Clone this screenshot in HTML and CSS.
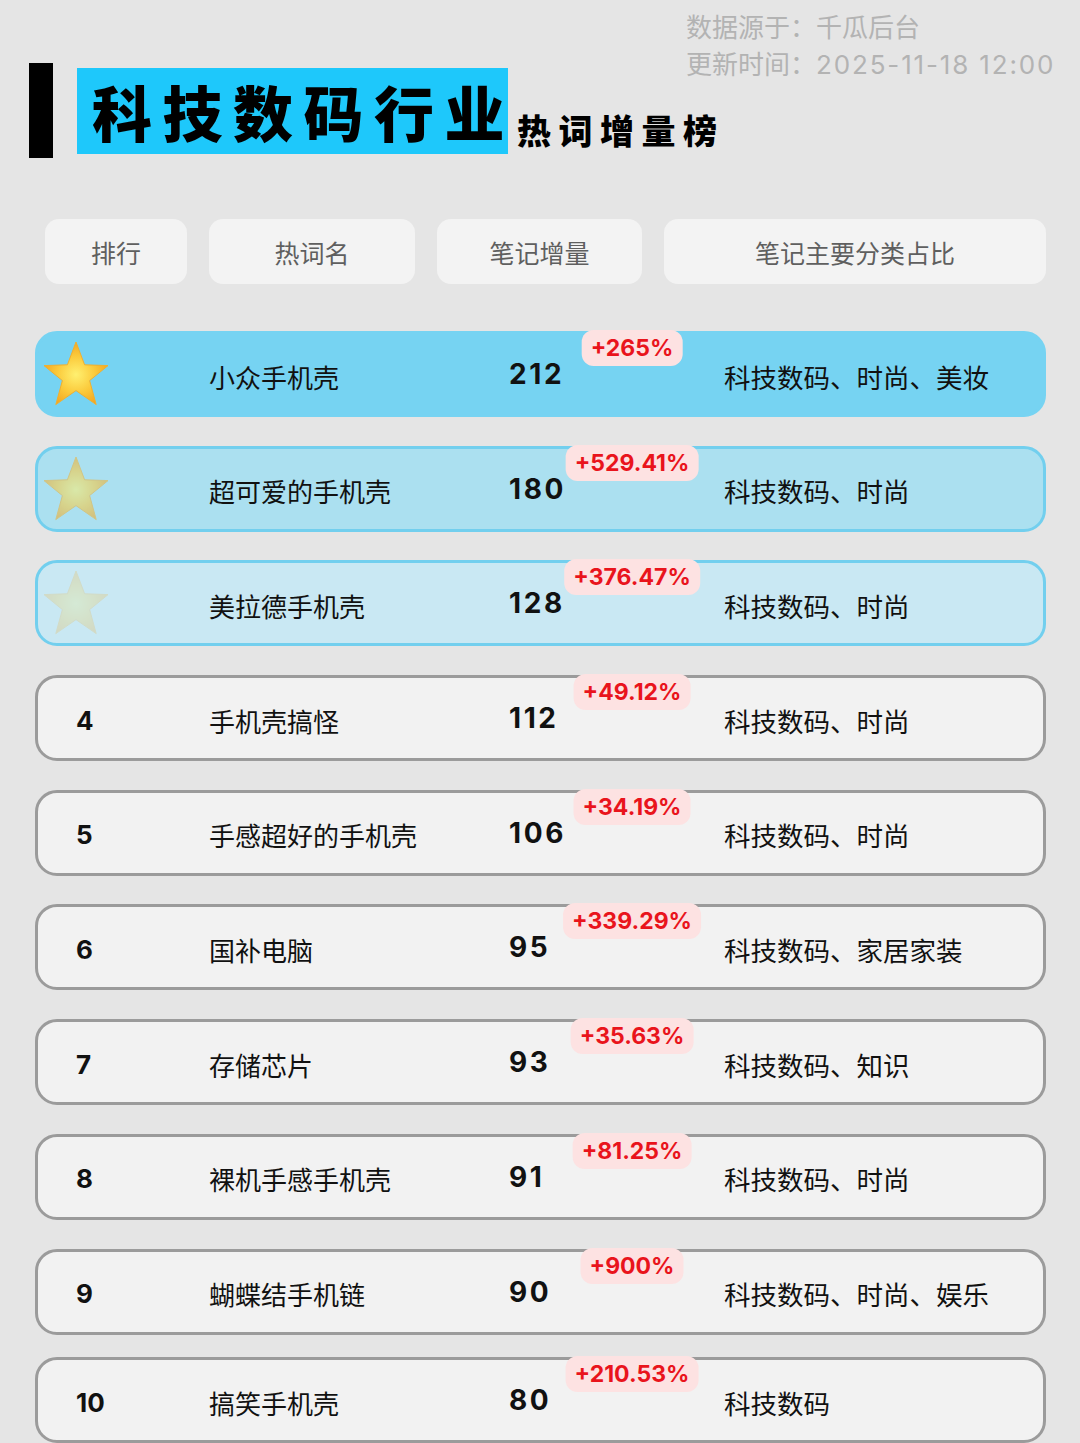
FILE: index.html
```html
<!DOCTYPE html>
<html lang="zh-CN">
<head>
<meta charset="utf-8">
<title>科技数码行业热词增量榜</title>
<link rel="stylesheet" href="styles.css">
</head>
<body>
<svg width="0" height="0" class="defs" aria-hidden="true">
  <defs>
    <radialGradient id="starGrad" cx="50%" cy="52%" r="55%">
      <stop offset="0%" stop-color="#fff070"/>
      <stop offset="55%" stop-color="#fbc93a"/>
      <stop offset="100%" stop-color="#f3a31f"/>
    </radialGradient>
    <symbol id="star" viewBox="0 0 68 68">
      <path d="M34 2 L42.6 24.8 L66 25.6 L47.6 40.6 L54.2 64.6 L34 50.6 L13.8 64.6 L20.4 40.6 L2 25.6 L25.4 24.8 Z" fill="url(#starGrad)" stroke="#f0b030" stroke-width="1" stroke-linejoin="round"/>
    </symbol>
  </defs>
</svg>
<div class="page">
  <header class="header">
    <div class="meta">
      <div class="meta-line">数据源于：千瓜后台</div>
      <div class="meta-line">更新时间：<span class="digits">2025-11-18 12:00</span></div>
    </div>
    <div class="title-row">
      <div class="title-bar"></div>
      <div class="title-box"><h1>科技数码行业</h1></div>
      <div class="subtitle">热词增量榜</div>
    </div>
  </header>

  <div class="thead">
    <div class="th">排行</div>
    <div class="th">热词名</div>
    <div class="th">笔记增量</div>
    <div class="th">笔记主要分类占比</div>
  </div>

  <div class="list">
    <div class="row top1">
      <div class="rank"><svg class="star" width="68" height="68"><use href="#star"/></svg></div>
      <div class="kw">小众手机壳</div>
      <div class="num">212</div>
      <div class="cat">科技数码、时尚、美妆</div>
      <span class="badge">+265%</span>
    </div>
    <div class="row top2">
      <div class="rank"><svg class="star" width="68" height="68"><use href="#star"/></svg></div>
      <div class="kw">超可爱的手机壳</div>
      <div class="num">180</div>
      <div class="cat">科技数码、时尚</div>
      <span class="badge">+529.41%</span>
    </div>
    <div class="row top3">
      <div class="rank"><svg class="star" width="68" height="68"><use href="#star"/></svg></div>
      <div class="kw">美拉德手机壳</div>
      <div class="num">128</div>
      <div class="cat">科技数码、时尚</div>
      <span class="badge">+376.47%</span>
    </div>
    <div class="row">
      <div class="rank">4</div>
      <div class="kw">手机壳搞怪</div>
      <div class="num">112</div>
      <div class="cat">科技数码、时尚</div>
      <span class="badge">+49.12%</span>
    </div>
    <div class="row">
      <div class="rank">5</div>
      <div class="kw">手感超好的手机壳</div>
      <div class="num">106</div>
      <div class="cat">科技数码、时尚</div>
      <span class="badge">+34.19%</span>
    </div>
    <div class="row">
      <div class="rank">6</div>
      <div class="kw">国补电脑</div>
      <div class="num">95</div>
      <div class="cat">科技数码、家居家装</div>
      <span class="badge">+339.29%</span>
    </div>
    <div class="row">
      <div class="rank">7</div>
      <div class="kw">存储芯片</div>
      <div class="num">93</div>
      <div class="cat">科技数码、知识</div>
      <span class="badge">+35.63%</span>
    </div>
    <div class="row">
      <div class="rank">8</div>
      <div class="kw">裸机手感手机壳</div>
      <div class="num">91</div>
      <div class="cat">科技数码、时尚</div>
      <span class="badge">+81.25%</span>
    </div>
    <div class="row">
      <div class="rank">9</div>
      <div class="kw">蝴蝶结手机链</div>
      <div class="num">90</div>
      <div class="cat">科技数码、时尚、娱乐</div>
      <span class="badge">+900%</span>
    </div>
    <div class="row last">
      <div class="rank">10</div>
      <div class="kw">搞笑手机壳</div>
      <div class="num">80</div>
      <div class="cat">科技数码</div>
      <span class="badge">+210.53%</span>
    </div>
  </div>
</div>
</body>
</html>
```

FILE: styles.css
```css
* { box-sizing: border-box; }
html, body { margin: 0; padding: 0; }
body {
  background: #e5e5e5;
  font-family: "Noto Sans CJK SC", "Noto Sans", sans-serif;
  color: #111;
  width: 1080px;
  height: 1443px;
  overflow: hidden;
  text-spacing-trim: space-all;
}
.defs { position: absolute; width: 0; height: 0; }
.page { display: flex; flex-direction: column; }

.header { display: flex; flex-direction: column; }
.meta {
  align-self: flex-end;
  margin-right: 14px;
  margin-top: 7px;
  width: 380px;
  height: 74px;
  font-size: 26px;
  color: #b3b3b3;
  white-space: nowrap;
}
.meta-line {
  height: 37px;
  line-height: 37px;
  overflow: visible;
}
.meta .digits {
  font-family: "Inter", "Noto Sans", sans-serif;
  letter-spacing: 1.85px;
}
.title-row {
  display: flex;
  align-items: center;
  margin-top: -18px;
  padding-left: 29px;
}
.title-bar {
  width: 24px;
  height: 95px;
  background: #000;
}
.title-box {
  margin-left: 24px;
  width: 431px;
  height: 86px;
  background: #1ec8fb;
  display: flex;
  align-items: center;
  padding-left: 15px;
}
.title-box h1 {
  margin: 0;
  font-size: 60px;
  line-height: 1;
  font-weight: 900;
  letter-spacing: 10.5px;
  color: #000;
  white-space: nowrap;
}
.subtitle {
  align-self: flex-end;
  margin-left: 9px;
  margin-bottom: 6px;
  font-size: 34px;
  line-height: 44px;
  font-weight: 900;
  letter-spacing: 7.5px;
  color: #000;
}

.thead {
  display: grid;
  grid-template-columns: 142px 206px 205px 1fr;
  gap: 22px;
  margin: 61px 34px 0 45px;
}
.th {
  height: 65px;
  background: #f3f3f3;
  border-radius: 14px;
  display: flex;
  align-items: center;
  justify-content: center;
  font-size: 25px;
  color: #5f5f5f;
}

.list {
  display: flex;
  flex-direction: column;
  gap: 28.7px;
  margin: 47px 34px 0 35px;
}
.row {
  position: relative;
  height: 86px;
  flex: none;
  border: 3px solid #9b9b9b;
  border-radius: 22px;
  background: #f2f2f2;
  display: grid;
  grid-template-columns: 133px 300px 215px 1fr;
  align-items: center;
  padding-left: 38px;
  padding-top: 4px;
}
.row.last { margin-top: -6px; }
.row.top1 { background: #76d3f2; border-color: #76d3f2; }
.row.top2 { background: #abe0f0; border-color: #72cfee; }
.row.top3 { background: #c9e8f3; border-color: #72cfee; }

.rank {
  font-family: "Inter", "Noto Sans", sans-serif;
  font-weight: 700;
  font-size: 26px;
  display: flex;
  align-items: center;
}
.star { margin-left: -34px; margin-top: -4px; display: block; }
.top2 .star { opacity: 0.55; }
.top3 .star { opacity: 0.22; }

.kw { font-size: 26px; white-space: nowrap; }
.num {
  font-family: "Inter", "Noto Sans", sans-serif;
  font-weight: 700;
  font-size: 28px;
  letter-spacing: 2.6px;
  margin-top: -4px;
}
.cat { font-size: 26.5px; white-space: nowrap; }

.badge {
  position: absolute;
  top: -4px;
  left: 594px;
  transform: translateX(-50%);
  height: 36px;
  padding: 0 9px;
  border-radius: 12px;
  background: #fde2e2;
  color: #e9141c;
  font-family: "Inter", "Noto Sans", sans-serif;
  font-weight: 700;
  font-size: 23px;
  line-height: 36px;
  white-space: nowrap;
}
```
